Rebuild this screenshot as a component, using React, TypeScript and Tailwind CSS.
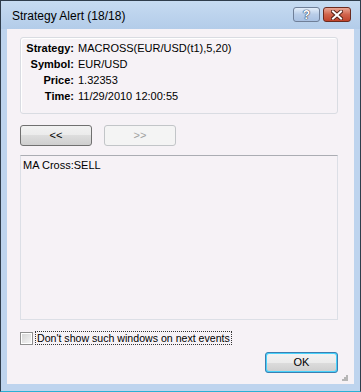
import React from 'react'

const rows = [
  ['Strategy:', 'MACROSS(EUR/USD(t1),5,20)'],
  ['Symbol:', 'EUR/USD'],
  ['Price:', '1.32353'],
  ['Time:', '11/29/2010 12:00:55'],
]

function CloseGlyph() {
  return (
    <svg width="12" height="10" viewBox="0 0 12 10">
      <path d="M2 1.5 L10 8.5 M10 1.5 L2 8.5" stroke="#5a2418" strokeWidth="4" strokeLinecap="square" />
      <path d="M2 1.5 L10 8.5 M10 1.5 L2 8.5" stroke="#ffffff" strokeWidth="2" strokeLinecap="square" />
    </svg>
  )
}

function Grip() {
  return (
    <svg width="7" height="7" viewBox="0 0 7 7">
      {[
        [5, 0],
        [3, 2],
        [5, 2],
        [1, 4],
        [3, 4],
        [5, 4],
      ].map(([x, y], i) => (
        <rect key={i} x={x} y={y} width="2" height="2" fill="#b6b6b6" />
      ))}
    </svg>
  )
}

export default function App() {
  return (
    <div className="flex h-[392px] w-[361px] flex-col border border-[#2f3d4c] border-b-[#2bb0d4] bg-[#bed4ee] font-['Liberation_Sans',sans-serif] text-[11px] text-black">
      {/* Title bar */}
      <div className="flex h-[28px] items-center bg-gradient-to-b from-[#c6dbf1] to-[#b3cce9] pl-[11px] pr-[9px]">
        <span className="flex-1 pt-[1px] text-[12px] text-[#000]">Strategy Alert (18/18)</span>
        <div className="flex gap-[3px] pb-[1px]">
          <div className="flex h-[15px] w-[27px] items-center justify-center rounded-[3px] border border-[#6f7f98] bg-gradient-to-b from-[#e4eefa] via-[#b8cde8] to-[#a9c1e2]">
            <span className="text-[12px] font-bold leading-none text-white [text-shadow:0_0_1px_#2c3e5c,0_0_1px_#2c3e5c,0_0_1px_#2c3e5c]">?</span>
          </div>
          <div className="flex h-[15px] w-[28px] items-center justify-center rounded-[3px] border border-[#6b2a1e] bg-gradient-to-b from-[#e9a796] via-[#d0644c] to-[#c0432b]">
            <CloseGlyph />
          </div>
        </div>
      </div>

      {/* Client area */}
      <div className="mx-[6px] mb-[7px] flex flex-1 flex-col bg-[#f6f2f6] px-[13px] pt-[8px]">
        {/* Info box */}
        <div className="h-[77px] w-[318px] rounded-[3px] border border-[#d9dce2] pt-[2px] shadow-[inset_1px_1px_0_#ffffff]">
          {rows.map(([label, value]) => (
            <div key={label} className="flex h-[16px] items-center">
              <span className="w-[53px] text-right font-bold">{label}</span>
              <span className="ml-[4px]">{value}</span>
            </div>
          ))}
        </div>

        {/* Navigation buttons */}
        <div className="mt-[11px] flex gap-[12px]">
          <button className="flex h-[21px] w-[72px] items-center justify-center rounded-[3px] border border-[#707070] bg-[linear-gradient(#f2f2f2_0%,#ebebeb_50%,#dddddd_50%,#cfcfcf_100%)] text-[11px]">
            &lt;&lt;
          </button>
          <button className="flex h-[21px] w-[72px] items-center justify-center rounded-[3px] border border-[#c2c5c8] bg-[#f4f4f4] text-[11px] text-[#a0a0a0]">
            &gt;&gt;
          </button>
        </div>

        {/* Message text */}
        <div className="mt-[9px] h-[165px] w-[318px] border border-[#dcdfe6] border-t-[#abadb3] px-[2px] pt-[1px]">
          MA Cross:SELL
        </div>

        {/* Checkbox */}
        <div className="mt-[11px] flex items-center gap-[2px]">
          <div className="flex h-[13px] w-[13px] items-center justify-center border border-[#8f8f8f] bg-white">
            <div className="h-[9px] w-[9px] bg-gradient-to-br from-[#d6d6d6] to-[#f4f4f4]" />
          </div>
          <span className="border border-dotted border-[#333] px-[1px] text-[10.6px] leading-[12px]">Don't show such windows on next events</span>
        </div>

        {/* OK */}
        <div className="mt-[7px] flex justify-end pr-[3px]">
          <button className="h-[21px] w-[73px] rounded-[3px] border border-[#3c7fb1] p-[1px] text-[11px] bg-[#48d2fb]">
            <div className="flex h-full w-full items-center justify-center rounded-[2px] bg-[linear-gradient(#f2f2f2_0%,#ebebeb_50%,#dddddd_50%,#cfcfcf_100%)]">
              OK
            </div>
          </button>
        </div>
        <div className="mt-[2px] flex justify-end">
          <div className="-mr-[7px]">
            <Grip />
          </div>
        </div>
      </div>
    </div>
  )
}
